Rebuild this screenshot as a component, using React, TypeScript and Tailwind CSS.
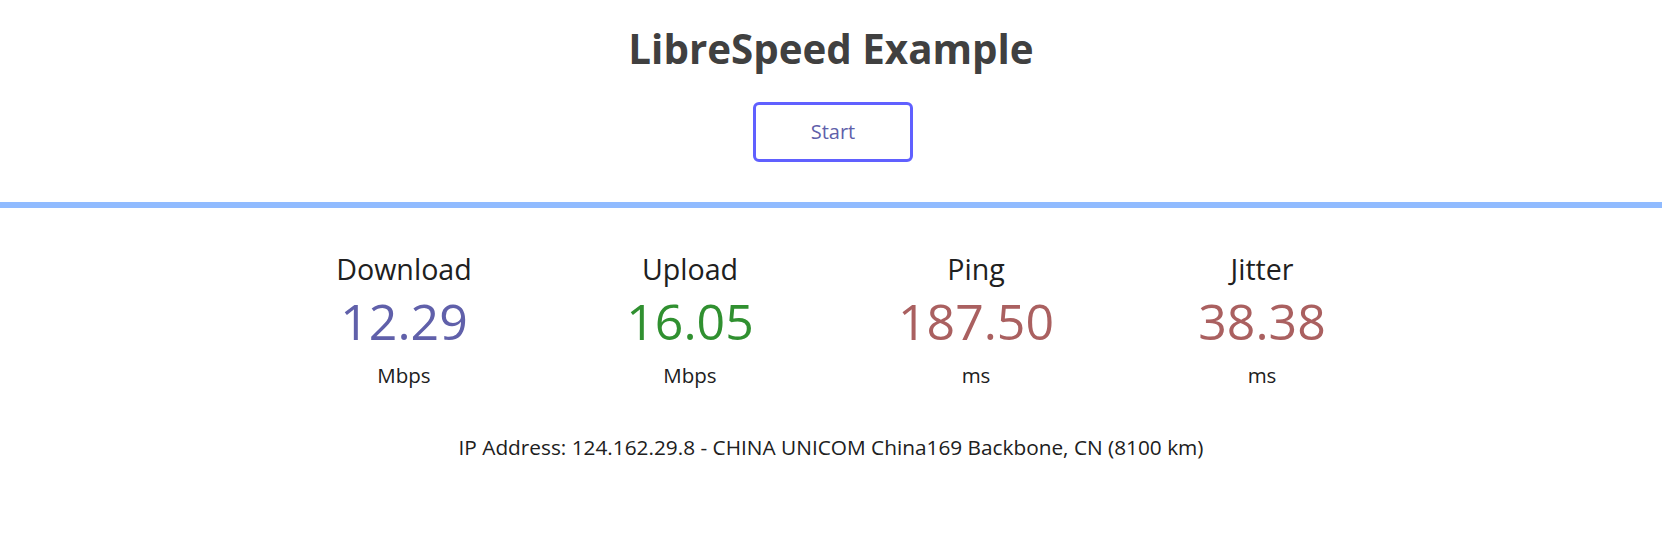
import React from "react";

const tests = [
  { name: "Download", value: "12.29", unit: "Mbps", color: "text-[#6060AA]" },
  { name: "Upload", value: "16.05", unit: "Mbps", color: "text-[#309030]" },
  { name: "Ping", value: "187.50", unit: "ms", color: "text-[#AA6060]" },
  { name: "Jitter", value: "38.38", unit: "ms", color: "text-[#AA6060]" },
];

export default function App() {
  return (
    <div
      className="min-h-screen w-full bg-white text-center text-[#202020]"
      style={{ fontFamily: '"Open Sans", "Noto Sans", sans-serif' }}
    >
      <div className="flex flex-col items-center pt-[25px]">
        <h1 className="text-[40.3px] leading-[48px] font-bold text-[#404040]">
          LibreSpeed Example
        </h1>
        <button className="mt-[29px] ml-[4px] h-[60px] w-[160px] rounded-[6px] border-[3px] border-[#6060FF] bg-transparent text-[20px] leading-[54px] text-[#6060AA]">
          Start
        </button>
      </div>
      <div className="mt-[40px] h-[6px] w-full bg-[#90BBFF]" />
      <div className="mt-[43px] flex justify-center gap-[6px] pl-[4px]">
        {tests.map((t) => (
          <div key={t.name} className="flex w-[280px] flex-col items-center">
            <div className="text-[28.6px] leading-[36px]">{t.name}</div>
            <div className={`mt-[4px] text-[50px] leading-[60px] ${t.color}`}>{t.value}</div>
            <div className="mt-[10px] text-[20.5px] leading-[28px]">{t.unit}</div>
          </div>
        ))}
      </div>
      <div className="mt-[44px] text-[20.8px] leading-[28px]">
        IP Address: 124.162.29.8 - CHINA UNICOM China169 Backbone, CN (8100 km)
      </div>
    </div>
  );
}
